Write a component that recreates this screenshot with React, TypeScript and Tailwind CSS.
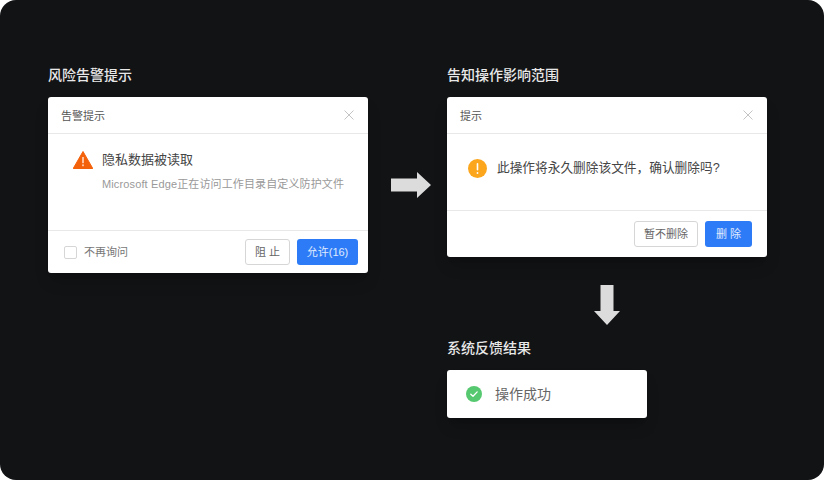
const font = 'font-["Liberation_Sans","Noto_Sans_CJK_SC",sans-serif]'

function CloseIcon() {
  return (
    <svg width="10" height="10" viewBox="0 0 10 10" fill="none" stroke="#c4c4c4" strokeWidth="1">
      <path d="M0.5 0.5 9.5 9.5M9.5 0.5 0.5 9.5" />
    </svg>
  )
}

function DialogHeader({ title }: { title: string }) {
  return (
    <div className="flex h-[37px] items-center justify-between border-b border-[#e8e8e8] pl-[13px] pr-[14px]">
      <span className="pt-0.5 text-[11px] leading-4 text-[#555]">{title}</span>
      <CloseIcon />
    </div>
  )
}

function Button({ label, primary, className }: { label: string; primary?: boolean; className: string }) {
  return (
    <button
      className={`flex h-[26px] items-center justify-center rounded-[3px] text-[11px] leading-none ${
        primary ? 'bg-[#2d7bf6] text-white/85' : 'border border-[#d6d6d6] bg-white text-[#666]'
      } ${className}`}
    >
      {label}
    </button>
  )
}

function Heading({ children }: { children: string }) {
  return <h2 className="mb-3 text-sm leading-5 font-medium text-[#e8e8e8]">{children}</h2>
}

export default function App() {
  return (
    <div className={`h-[480px] w-[824px] bg-white ${font}`}>
      <div className="flex h-full rounded-2xl bg-[#121315] pl-12 pt-[65px]">
        {/* Risk alert */}
        <section className="w-80">
          <Heading>风险告警提示</Heading>
          <div className="h-[176px] rounded-[3px] bg-white shadow-lg shadow-black/20">
            <DialogHeader title="告警提示" />
            <div className="h-[96px] pl-[25px] pt-[16px]">
              <div className="flex items-center">
                <svg width="20" height="18" viewBox="0 0 20 18">
                  <path d="M10 0.5 19.8 17.5H0.2Z" fill="#f4610b" stroke="#f4610b" strokeLinejoin="round" />
                  <rect x="9.2" y="6" width="1.6" height="6.2" fill="#ffd9c2" />
                  <rect x="9.2" y="13.4" width="1.6" height="1.8" fill="#ffd9c2" />
                </svg>
                <span className="ml-[9px] text-[13px] leading-5 text-[#444]">隐私数据被读取</span>
              </div>
              <p className="ml-[29px] mt-[6px] text-[11px] leading-4 tracking-[0.13px] text-[#999]">Microsoft Edge正在访问工作目录自定义防护文件</p>
            </div>
            <div className="flex h-[43px] items-center border-t border-[#e8e8e8] pl-4 pr-[10px]">
              <span className="h-[13px] w-[13px] rounded-[2px] border border-[#d6d6d6]" />
              <span className="ml-[7px] text-[11px] leading-4 text-[#777]">不再询问</span>
              <Button label="阻 止" className="ml-auto w-[45px]" />
              <Button label="允许(16)" primary className="ml-[7px] w-[61px]" />
            </div>
          </div>
        </section>

        {/* Arrow right */}
        <svg className="ml-[23px] mr-4 mt-[107px]" width="40" height="26" viewBox="0 0 40 26">
          <path d="M0 6.5H26V0L40 13 26 26V19.5H0Z" fill="#dcdcdc" />
        </svg>

        <section className="w-80">
          <Heading>告知操作影响范围</Heading>
          <div className="h-[160px] rounded-[3px] bg-white shadow-lg shadow-black/20">
            <DialogHeader title="提示" />
            <div className="h-[76px] pl-[21px] pt-[24px]">
              <div className="flex items-center">
                <svg width="19" height="19" viewBox="0 0 19 19">
                  <circle cx="9.5" cy="9.5" r="9.5" fill="#fba61c" />
                  <rect x="8.7" y="4" width="1.6" height="7.5" rx="0.8" fill="#fff" />
                  <rect x="8.6" y="13" width="1.8" height="1.9" rx="0.9" fill="#fff" />
                </svg>
                <span className="ml-[10px] text-[12.7px] leading-5 text-[#444]">此操作将永久删除该文件，确认删除吗?</span>
              </div>
            </div>
            <div className="flex h-[47px] items-center justify-end gap-[7px] border-t border-[#e8e8e8] pr-[15px]">
              <Button label="暂不删除" className="w-16" />
              <Button label="删 除" primary className="w-[47px]" />
            </div>
          </div>

          {/* Arrow down */}
          <svg className="ml-[147px] mt-7" width="26" height="40" viewBox="0 0 26 40">
            <path d="M6.5 0H19.5V26H26L13 40 0 26H6.5Z" fill="#dcdcdc" />
          </svg>

          <div className="mt-[13px]">
            <Heading>系统反馈结果</Heading>
            <div className="flex h-12 w-[200px] items-center rounded-[3px] bg-white pl-[19px] shadow-lg shadow-black/20">
              <svg width="16" height="16" viewBox="0 0 16 16" fill="none">
                <circle cx="8" cy="8" r="8" fill="#56c870" />
                <path d="M4.8 8.2 7 10.3 11.2 5.9" stroke="#fff" strokeWidth="1.3" strokeLinecap="round" strokeLinejoin="round" />
              </svg>
              <span className="ml-[13px] text-sm leading-5 text-[#666]">操作成功</span>
            </div>
          </div>
        </section>
      </div>
    </div>
  )
}
